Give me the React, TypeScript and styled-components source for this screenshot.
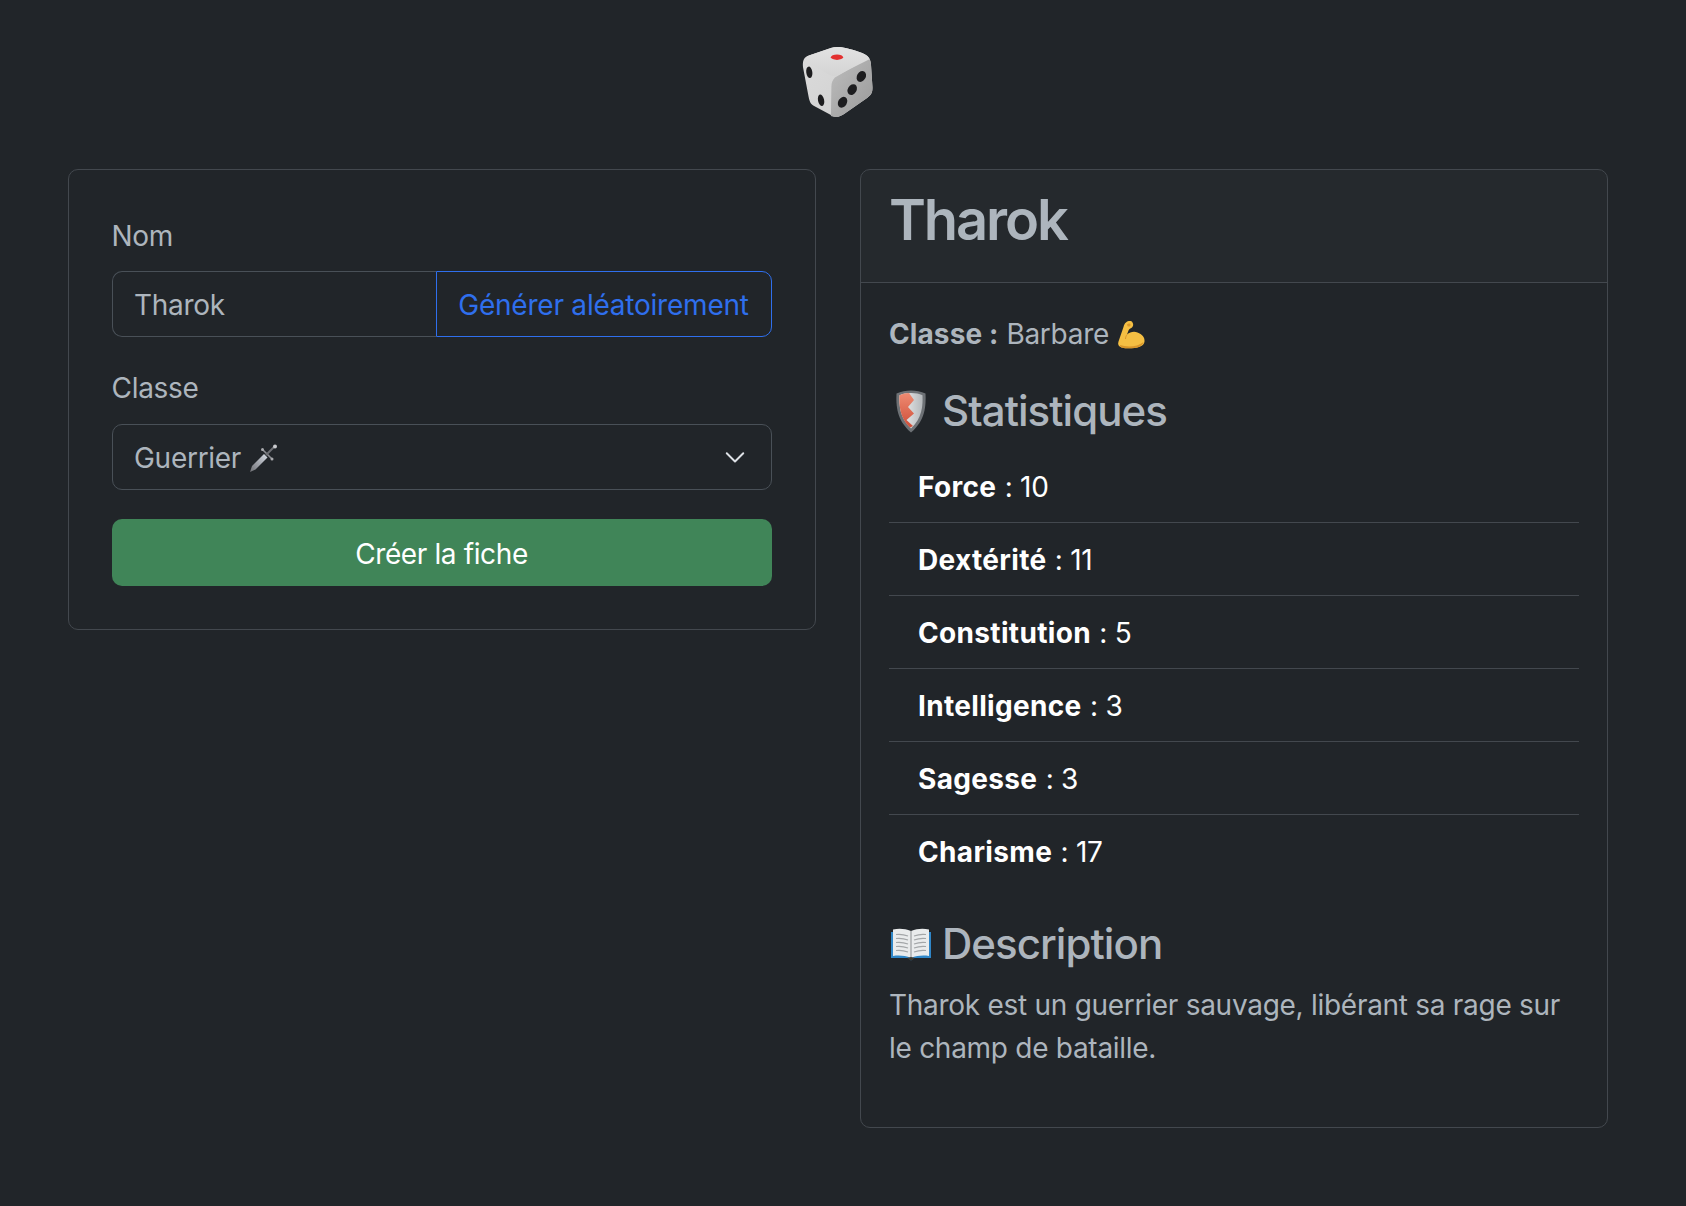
import React from "react";
import styled, { createGlobalStyle } from "styled-components";

const Global = createGlobalStyle`
  html, body { margin: 0; padding: 0; background: #212529; }
  body { font-family: Inter, "Noto Sans", "Liberation Sans", sans-serif; font-size: 28px; line-height: 42px; color: #adb5bd; letter-spacing: -0.28px; }
  * { box-sizing: border-box; }
`;

const Page = styled.div`
  width: 1686px;
  min-height: 1206px;
  padding: 42px 68px 0;
`;
const Header = styled.header`
  display: flex;
  justify-content: center;
  height: 127px;
  padding: 4px 11px 0 0;
`;
const Columns = styled.main`
  display: grid;
  grid-template-columns: 748px 748px;
  gap: 44px;
  align-items: start;
`;
const Card = styled.section`
  border: 1.5px solid #43484e;
  border-radius: 10px;
  overflow: hidden;
`;
const FormBody = styled.form`
  padding: 43px 43.5px 42.5px 42.5px;
`;
const Label = styled.label<{ $height: number }>`
  display: block;
  height: ${(p) => p.$height}px;
  line-height: 46px;
`;
const InputGroup = styled.div`
  display: flex;
  height: 66px;
  margin-bottom: 28px;
`;
const TextInput = styled.input`
  flex: 1;
  min-width: 0;
  background: transparent;
  border: 1.5px solid #495057;
  border-right: 0;
  border-radius: 10px 0 0 10px;
  padding: 2px 21.5px 0;
  font: inherit;
  letter-spacing: inherit;
  color: #adb5bd;
  outline: none;
`;
const OutlineButton = styled.button`
  width: 336px;
  flex: none;
  background: transparent;
  border: 1.5px solid #2f6fed;
  border-radius: 0 10px 10px 0;
  padding: 2px 0 0;
  font: inherit;
  letter-spacing: -0.22px;
  color: #2f6fed;
`;
const SelectBox = styled.div`
  display: flex;
  align-items: center;
  height: 66px;
  margin-bottom: 29px;
  padding: 0 24px 0 21.5px;
  border: 1.5px solid #495057;
  border-radius: 10px;
  color: #adb5bd;
`;
const SelectValue = styled.span`
  flex: 1;
  display: flex;
  align-items: center;
  gap: 8px;
  padding-top: 2px;
`;
const SubmitButton = styled.button`
  display: block;
  width: 100%;
  height: 67px;
  background: #408558;
  border: 0;
  border-radius: 10px;
  padding: 2px 0 0;
  font: inherit;
  letter-spacing: -0.38px;
  color: #fff;
`;
const CardHead = styled.div`
  height: 113px;
  padding: 17px 28px 0;
  background: rgba(255, 255, 255, 0.02);
  border-bottom: 1.5px solid #43484e;
`;
const Title = styled.h2`
  margin: 0;
  font-size: 56px;
  line-height: 67px;
  font-weight: 600;
  letter-spacing: -2.1px;
  color: #adb5bd;
`;
const CardBody = styled.div`
  padding: 30px 28px 0;
  height: 844px;
`;
const ClassLine = styled.p`
  margin: 0;
  display: flex;
  align-items: center;
  gap: 8px;
  line-height: 42px;
  strong { font-weight: 700; letter-spacing: 0.1px; }
`;
const SectionTitle = styled.h4<{ $top: number }>`
  display: flex;
  align-items: center;
  gap: 10px;
  margin: ${(p) => p.$top}px 0 0;
  font-size: 42px;
  line-height: 50px;
  font-weight: 500;
  letter-spacing: -0.95px;
  color: #adb5bd;
`;
const EmojiSlot = styled.span`
  display: flex;
  justify-content: center;
  width: 43px;
  flex: none;
`;
const StatList = styled.ul`
  list-style: none;
  margin: 14px 0 0;
  padding: 0;
`;
const StatRow = styled.li`
  height: 73px;
  padding: 1px 29px 0;
  display: flex;
  align-items: center;
  gap: 0.3em;
  color: #fff;
  border-bottom: 1.5px solid #43484e;
  &:last-child { border-bottom: 0; }
  strong { font-weight: 700; letter-spacing: 0.33px; }
`;
const Description = styled.p`
  margin: 15px 0 0;
  line-height: 43px;
`;

const Dice = () => (
  <svg width="72" height="72" viewBox="0 0 70 71" aria-hidden>
    <defs>
      <linearGradient id="dt" x1="0" y1="0" x2="0" y2="1"><stop offset="0" stopColor="#e2e2e2" /><stop offset="1" stopColor="#d4d4d4" /></linearGradient>
      <linearGradient id="dl" x1="0" y1="0" x2="1" y2="1"><stop offset="0" stopColor="#dcdcdc" /><stop offset="1" stopColor="#cfcfcf" /></linearGradient>
      <linearGradient id="dr" x1="0" y1="0" x2="1" y2="1"><stop offset="0" stopColor="#bdbdbd" /><stop offset="1" stopColor="#9a9a9a" /></linearGradient>
    </defs>
    <path d="M28 2C34 0 42 1 56 6C64 9 67 11 67.500 18L69 41C69 46 68 48 64 51L41 67C36 70 33 71 28 68L11 59C8 57 7 55 6 50L0.500 21C0 14 1 11 7 9Z" fill="url(#dl)" />
    <path d="M32 31C30 33 28.500 36 28.500 40L28 69C33 71 36 70 41 67L64 51C68 48 69 46 69 41L67.500 18C67.400 15 66 13 65 12Z" fill="url(#dr)" />
    <path d="M28 2C34 0 42 1 56 6C62 8 65 10 66 13L36 28C32 30 30 30 26 28L3 15C2 12 4 10 7 9Z" fill="url(#dt)" />
    <ellipse cx="34" cy="11" rx="6" ry="2.700" fill="#e3302f" />
    <ellipse cx="6.700" cy="26" rx="3" ry="5.700" transform="rotate(-8 6.700 26)" fill="#1d1d1f" />
    <ellipse cx="18.300" cy="53.500" rx="3" ry="5.700" transform="rotate(-12 18.300 53.500)" fill="#1d1d1f" />
    <ellipse cx="58" cy="30" rx="4.300" ry="5.700" transform="rotate(30 58 30)" fill="#1d1d1f" />
    <ellipse cx="49" cy="43" rx="4.300" ry="5.700" transform="rotate(30 49 43)" fill="#1d1d1f" />
    <ellipse cx="39.500" cy="55.500" rx="4.300" ry="5.700" transform="rotate(30 39.500 55.500)" fill="#1d1d1f" />
  </svg>
);

const Dagger = () => (
  <svg width="28" height="29" viewBox="0 0 28 29" aria-hidden>
    <defs>
      <linearGradient id="bl" x1="0" y1="1" x2="1" y2="0"><stop offset="0" stopColor="#6f7075" /><stop offset="1" stopColor="#d5dbe4" /></linearGradient>
    </defs>
    <path d="M1 28L3 22L15 10L18.500 13.500L6.500 25.500Z" fill="url(#bl)" />
    <path d="M14 6L22.500 14.500" stroke="#8b8d92" strokeWidth="1.600" strokeLinecap="round" />
    <path d="M17 11L25 3" stroke="#6d6f74" strokeWidth="2" />
    <circle cx="13.500" cy="5.500" r="1.500" fill="#a8a9ad" />
    <circle cx="23" cy="15" r="1.500" fill="#a8a9ad" />
    <circle cx="26" cy="2.500" r="2" fill="#c9cace" />
  </svg>
);

const Chevron = () => (
  <svg width="24" height="24" viewBox="0 0 16 16" aria-hidden>
    <path d="M2.500 5.500l5.500 5.500 5.500-5.500" fill="none" stroke="#dee2e6" strokeWidth="1.300" strokeLinecap="round" strokeLinejoin="round" />
  </svg>
);

const Muscle = () => (
  <svg width="28" height="29" viewBox="0 0 28 29" aria-hidden>
    <path d="M4.500 27.500C1.500 26.500 0.500 24.500 1.500 21.500L6.500 7C7 5 7.500 3.500 9 2.500C11 0.800 14.500 0.500 15.500 2.500C16.500 4 16.500 6 15 7.500C13.500 8.500 12 9 11.500 10.500L10 14.500C13 12 17 11 20.500 12.500C25 14 28 17.500 27.500 21.500C27 25.500 22.500 27.500 17.500 28C13 28.500 8 28.500 4.500 27.500Z" fill="#f5bf43" />
    <path d="M3 25C9 27 20 27.500 26.500 22C25.500 26 21.500 27.500 17.500 28C13 28.500 8 28.500 4.500 27.500C3.500 27 3 26 3 25Z" fill="#d9962a" />
    <path d="M10 4.500C11.500 3 13.500 3.500 13.500 5C13.500 6.500 11.500 7 10.500 6Z" fill="#d9962a" />
    <path d="M10 14.500C9 16 8.500 17.500 8.500 19" stroke="#d9962a" strokeWidth="1" fill="none" />
  </svg>
);

const Shield = () => (
  <svg width="30" height="43" viewBox="0 0 30 43" aria-hidden>
    <defs>
      <linearGradient id="sw" x1="0" y1="0" x2="1" y2="0"><stop offset="0" stopColor="#f5f5f5" /><stop offset="1" stopColor="#b4b8bb" /></linearGradient>
      <linearGradient id="sr" x1="0" y1="0" x2="0" y2="1"><stop offset="0" stopColor="#ee8b72" /><stop offset="1" stopColor="#cf4d38" /></linearGradient>
    </defs>
    <path d="M15 0.500C20 0.500 25 1.500 29.500 3.500C30 16 29.500 30 15 42.500C0.500 30 0 16 0.500 3.500C5 1.500 10 0.500 15 0.500Z" fill="#6d7175" />
    <path d="M15 3C20 3 23 3.800 26.500 5.200C27 16 26 28 15 38.500C4 28 3 16 3.500 5.200C7 3.800 10 3 15 3Z" fill="url(#sw)" />
    <path d="M13 3.100C10 3.300 7 3.800 3.500 5.200C3 16 4 28 14 37.600L17 36L10.500 30L18 23.500L12 17L18 10Z" fill="url(#sr)" />
  </svg>
);

const Book = () => (
  <svg width="40" height="33" viewBox="0 0 40 33" aria-hidden>
    <path d="M0 4H40V30H23L20 32.500L17 30H0Z" fill="#2f86c7" />
    <path d="M2 1.500C8 0 14 0.500 20 3C26 0.500 32 0 38 1.500V28C32 27 26 27.500 20 30C14 27.500 8 27 2 28Z" fill="#e9ebec" />
    <path d="M20 3V30" stroke="#8a8d8f" strokeWidth="1" />
    <path d="M5 6.500C9 6 13 6.500 17 8M5 10.500C9 10 13 10.500 17 12M5 14.500C9 14 13 14.500 17 16M5 18.500C9 18 13 18.500 17 20M5 22.500C9 22 13 22.500 17 24M35 6.500C31 6 27 6.500 23 8M35 10.500C31 10 27 10.500 23 12M35 14.500C31 14 27 14.500 23 16M35 18.500C31 18 27 18.500 23 20M35 22.500C31 22 27 22.500 23 24" stroke="#a3a6a8" strokeWidth="1.200" fill="none" />
    <path d="M16 30L20 32.500L24 30L20 29Z" fill="#3d3a30" />
  </svg>
);

const stats: [string, number][] = [
  ["Force", 10],
  ["Dextérité", 11],
  ["Constitution", 5],
  ["Intelligence", 3],
  ["Sagesse", 3],
  ["Charisme", 17],
];

export default function App() {
  return (
    <Page>
      <Global />
      <Header><Dice /></Header>
      <Columns>
        <Card>
          <FormBody>
            <Label htmlFor="nom" $height={58}>Nom</Label>
            <InputGroup>
              <TextInput id="nom" defaultValue="Tharok" />
              <OutlineButton type="button">Générer aléatoirement</OutlineButton>
            </InputGroup>
            <Label $height={59}>Classe</Label>
            <SelectBox>
              <SelectValue>Guerrier <Dagger /></SelectValue>
              <Chevron />
            </SelectBox>
            <SubmitButton type="button">Créer la fiche</SubmitButton>
          </FormBody>
        </Card>
        <Card>
          <CardHead><Title>Tharok</Title></CardHead>
          <CardBody>
            <ClassLine><strong>Classe :</strong> Barbare <Muscle /></ClassLine>
            <SectionTitle $top={31}><EmojiSlot><Shield /></EmojiSlot>Statistiques</SectionTitle>
            <StatList>
              {stats.map(([name, value]) => (
                <StatRow key={name}><strong>{name}</strong> <span>: {value}</span></StatRow>
              ))}
            </StatList>
            <SectionTitle $top={31}><EmojiSlot><Book /></EmojiSlot>Description</SectionTitle>
            <Description>Tharok est un guerrier sauvage, libérant sa rage sur le champ de bataille.</Description>
          </CardBody>
        </Card>
      </Columns>
    </Page>
  );
}
